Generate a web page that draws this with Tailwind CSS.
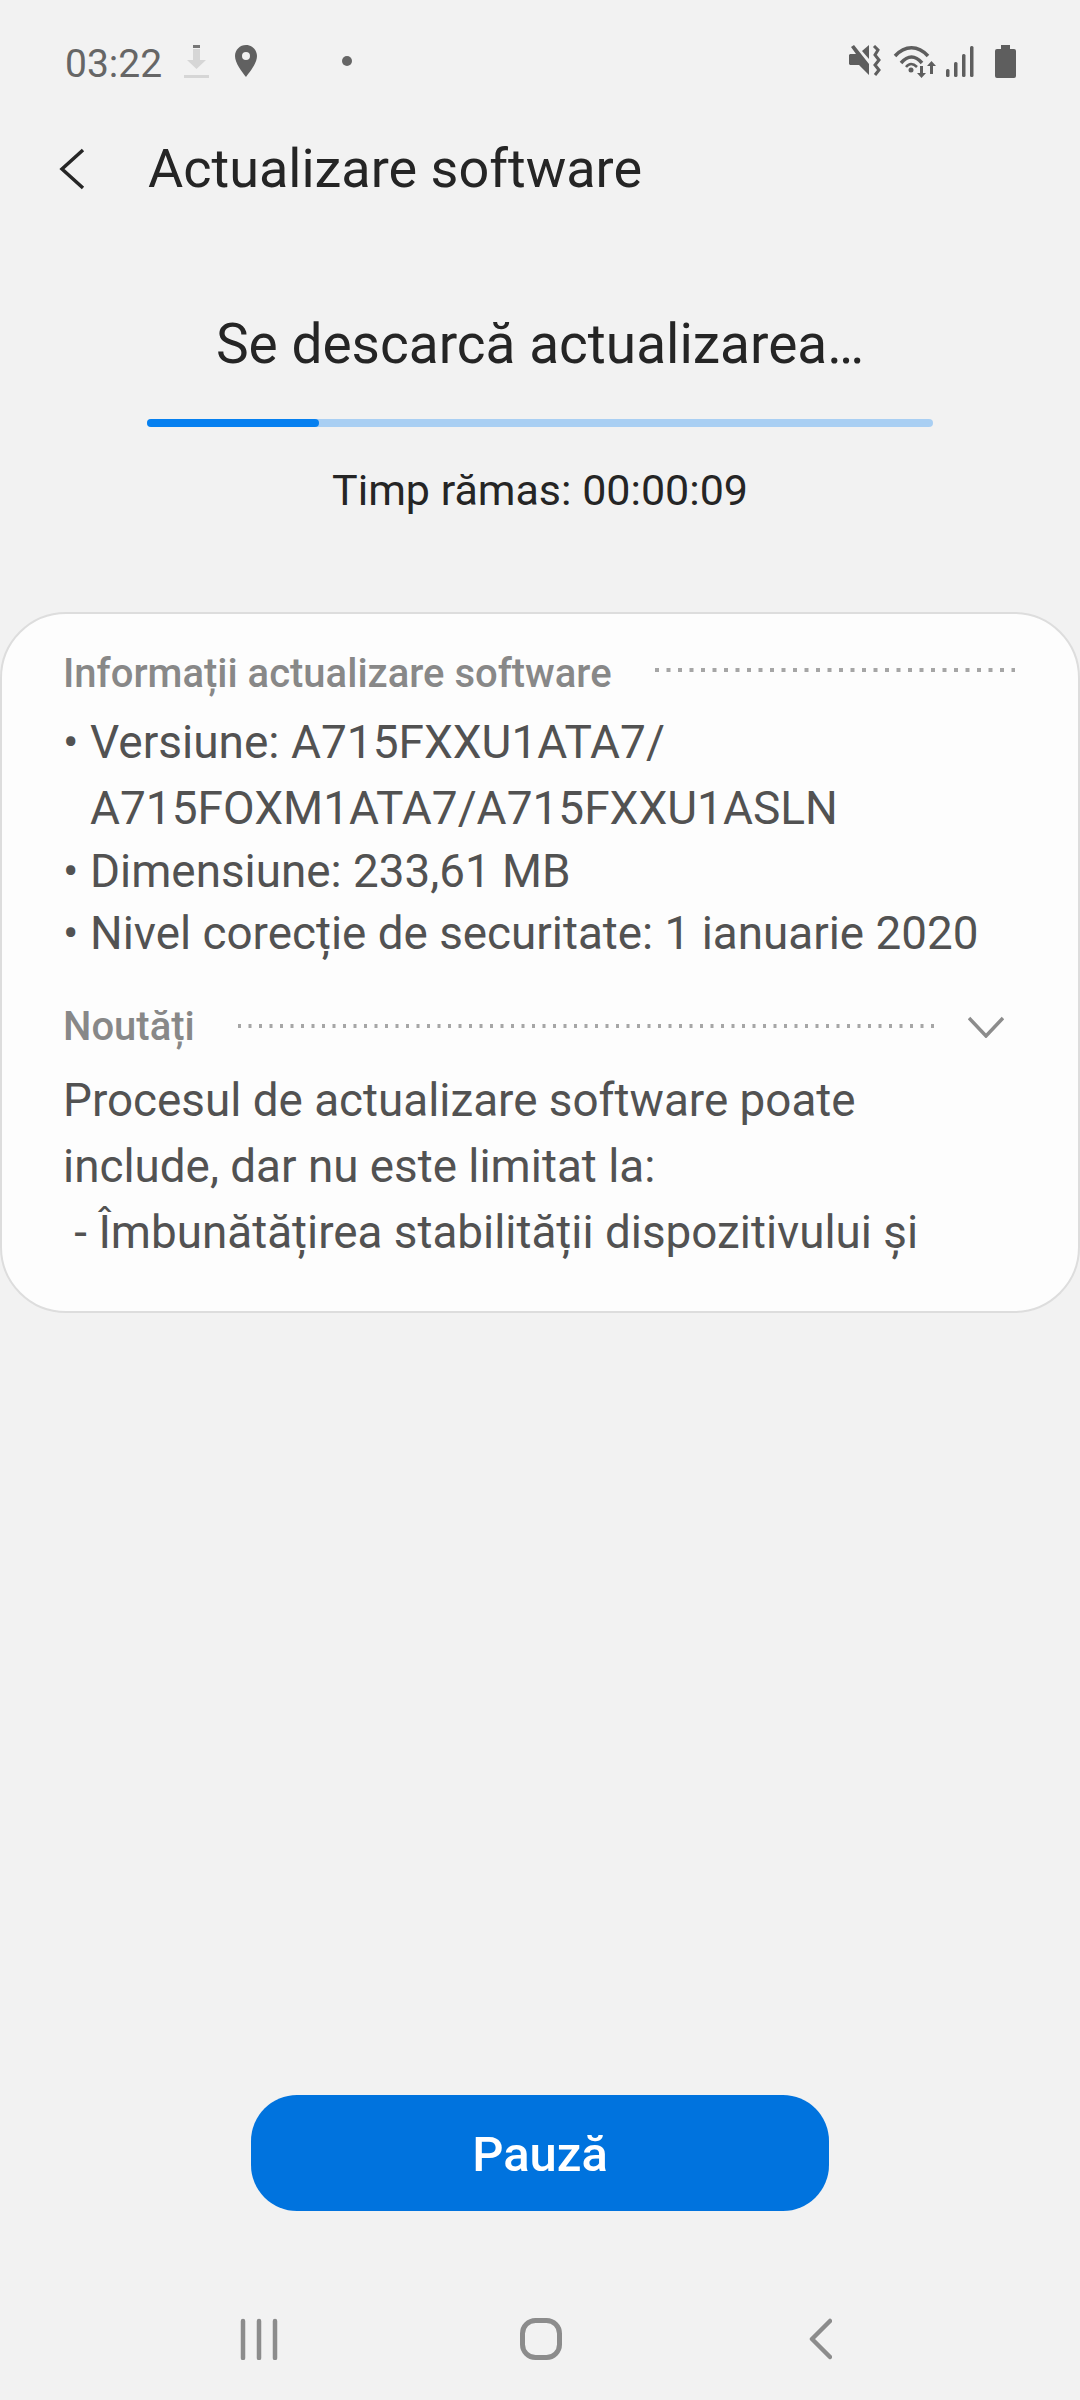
<!DOCTYPE html>
<html lang="ro">
<head>
  <meta charset="UTF-8" />
  <meta name="viewport" content="width=device-width, initial-scale=1.0" />
  <title>Actualizare software</title>
  <script src="https://cdn.jsdelivr.net/npm/@tailwindcss/browser@4"></script>
</head>
<body class="bg-[#f2f2f2] font-['Roboto',sans-serif]">
  <div class="h-[2400px] w-[1080px] flex flex-col overflow-hidden">

    <!-- status bar -->
    <div class="h-[122px] flex items-center pl-[65px] pr-[64px] shrink-0">
      <span class="text-[39px] leading-[46px] pt-[6px] text-[#666666]">03:22</span>
      <svg class="ml-[22px]" width="25" height="33" viewBox="0 0 25 33">
        <rect x="9" y="0" width="7" height="3" fill="#777777" />
        <path d="M9 4h7v11h6l-9.500 9L3 15h6z" fill="#d6d6d6" />
        <rect x="0" y="30" width="25" height="3" fill="#d6d6d6" />
      </svg>
      <svg class="ml-[26px]" width="22" height="32" viewBox="0 0 22 32">
        <path fill-rule="evenodd" d="M11 0C17 0 22 4.800 22 11C22 18 15 27 11 32C7 27 0 18 0 11C0 4.800 5 0 11 0ZM11 7A4 4 0 1 0 11 15A4 4 0 1 0 11 7Z" fill="#616161" />
      </svg>
      <span class="ml-[85px] size-[10px] rounded-full bg-[#666666]"></span>
      <div class="ml-auto flex items-center">
        <svg width="32" height="32" viewBox="0 0 32 32">
          <path d="M2 2L5 0 20 19V30L10 20H1L0 19V10L1 9H7z" fill="#5e5e5e" />
          <path d="M13 6L20 0V14z" fill="#5e5e5e" />
          <path d="M25 1l4 4-3 5 4 5-4 5 4 5-4 5" fill="none" stroke="#5e5e5e" stroke-width="3" />
        </svg>
        <svg class="ml-[12px]" width="43" height="33" viewBox="0 0 43 33">
          <g fill="none" stroke="#5e5e5e" stroke-width="3.500">
            <path d="M2 11C12 0 25 0 35 11" />
            <path d="M8 18C15 10 22 10 29 18" />
          </g>
          <path d="M13 22C16 18 20 18 24 22" fill="none" stroke="#5e5e5e" stroke-width="2.500" />
          <circle cx="18" cy="25" r="2.500" fill="#5e5e5e" />
          <path d="M27 21h3v7h3l-4.500 5L24 28h3z" fill="#5e5e5e" />
          <path d="M37 29h3v-8h3l-4.500-5L34 21h3z" fill="#5e5e5e" />
        </svg>
        <svg class="ml-[10px]" width="28" height="31" viewBox="0 0 28 31">
          <rect x="0" y="23" width="3.500" height="8" rx="1.500" fill="#5e5e5e" />
          <rect x="8" y="16" width="3.500" height="15" rx="1.500" fill="#5e5e5e" />
          <rect x="16" y="8" width="3.500" height="23" rx="1.500" fill="#5e5e5e" />
          <rect x="24" y="0" width="3.500" height="31" rx="1.500" fill="#5e5e5e" />
        </svg>
        <svg class="ml-[21px]" width="21" height="33" viewBox="0 0 21 33">
          <path d="M6 0h9v4h4a2 2 0 0 1 2 2v25a2 2 0 0 1-2 2H2a2 2 0 0 1-2-2V6a2 2 0 0 1 2-2h4z" fill="#5e5e5e" />
        </svg>
      </div>
    </div>

    <!-- title -->
    <div class="h-[94px] flex items-center pl-[58px] shrink-0">
      <svg width="28" height="44" viewBox="0 0 28 44">
        <path d="M25 3L4 22l21 19" fill="none" stroke="#262626" stroke-width="3.500" />
      </svg>
      <h1 class="ml-[62px] text-[54px] leading-[60px] text-[#252525]">Actualizare software</h1>
    </div>

    <!-- progress -->
    <p class="mt-[88px] text-center text-[55px] leading-[80px] text-[#252525] shrink-0">Se descarcă actualizarea…</p>
    <div class="mt-[35px] mx-[147px] h-[8px] rounded-full bg-[#a9cff3] shrink-0">
      <div class="h-full w-[172px] rounded-full bg-[#0680f0]"></div>
    </div>
    <p class="mt-[33px] text-center text-[43px] leading-[60px] text-[#252525] shrink-0">Timp rămas: 00:00:09</p>

    <!-- info card -->
    <div class="mt-[92px] h-[701px] rounded-[66px] border-2 border-[#dddddd] bg-[#fdfdfd] pt-[30px] pl-[61px] pr-[62px] shrink-0">
      <div class="h-[60px] flex items-center">
        <h2 class="text-[40px] leading-[60px] font-medium text-[#888888]">Informații actualizare software</h2>
        <svg class="ml-auto mr-[1px] -translate-y-[4px]" width="360" height="4" viewBox="0 0 360 4">
          <line x1="0" y1="2" x2="360" y2="2" stroke="#a6a6a6" stroke-width="4" stroke-dasharray="4 7.500" />
        </svg>
      </div>
      <div class="mt-[5px] text-[45.800px] text-[#525252]">
        <div class="flex leading-[66px] text-[46px]">
          <span class="w-[27px] shrink-0">•</span>
          <span>Versiune: A715FXXU1ATA7/<br />A715FOXM1ATA7/A715FXXU1ASLN</span>
        </div>
        <div class="flex leading-[62px]">
          <span class="w-[27px] shrink-0">•</span>
          <span>Dimensiune: 233,61 MB</span>
        </div>
        <div class="flex leading-[62px]">
          <span class="w-[27px] shrink-0">•</span>
          <span>Nivel corecție de securitate: 1 ianuarie 2020</span>
        </div>
      </div>
      <div class="mt-[32px] h-[60px] flex items-center">
        <h2 class="w-[175px] shrink-0 text-[40px] leading-[60px] font-medium text-[#888888]">Noutăți</h2>
        <svg class="-translate-y-[1px] shrink-0" width="698" height="4" viewBox="0 0 698 4">
          <line x1="0" y1="2" x2="698" y2="2" stroke="#a6a6a6" stroke-width="4" stroke-dasharray="3 7.500" />
        </svg>
        <svg class="ml-[32px] shrink-0" width="36" height="22" viewBox="0 0 36 22">
          <path d="M1 2l17 18L35 2" fill="none" stroke="#8c8c8c" stroke-width="3.500" />
        </svg>
      </div>
      <div class="mt-[11px] text-[45.800px] leading-[66px] text-[#525252] whitespace-pre">Procesul de actualizare software poate
include, dar nu este limitat la:
 - Îmbunătățirea stabilității dispozitivului și</div>
    </div>

    <!-- pause button -->
    <div class="mt-auto flex justify-center shrink-0">
      <button class="h-[116px] w-[578px] rounded-[46px] bg-[#0073de] pt-[4px] text-[49px] font-medium text-white">Pauză</button>
    </div>

    <!-- navigation bar -->
    <div class="mt-[107px] h-[82px] flex items-start pl-[239px] shrink-0">
      <svg width="40" height="42" viewBox="0 0 40 42">
        <g stroke="#8c8c8c" stroke-width="4.500" stroke-linecap="round">
          <line x1="4" y1="3" x2="4" y2="40" />
          <line x1="20" y1="3" x2="20" y2="40" />
          <line x1="36" y1="3" x2="36" y2="40" />
        </g>
      </svg>
      <svg class="ml-[241px]" width="42" height="42" viewBox="0 0 42 42">
        <rect x="2.500" y="2.500" width="37" height="37" rx="13" fill="none" stroke="#8c8c8c" stroke-width="5" />
      </svg>
      <svg class="ml-[244px]" width="26" height="42" viewBox="0 0 26 42">
        <path d="M24 3L6 21l18 18" fill="none" stroke="#8c8c8c" stroke-width="4.500" stroke-linecap="round" stroke-linejoin="round" />
      </svg>
    </div>
  </div>
</body>
</html>
